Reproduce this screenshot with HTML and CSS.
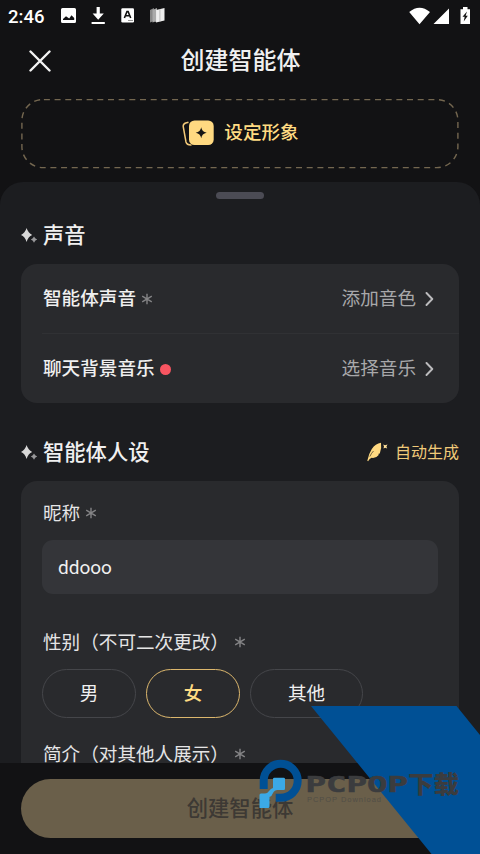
FILE: index.html
```html
<!DOCTYPE html>
<html lang="zh-CN">
<head>
<meta charset="utf-8">
<title>创建智能体</title>
<link rel="stylesheet" href="styles.css">
</head>
<body>
<svg width="0" height="0" class="defs">
  <symbol id="sparkle" viewBox="0 0 17 16"><path d="M5.600 0Q7.200 5.200 11.200 6.900Q7.200 8.600 5.600 13.900Q4 8.600 0 6.900Q4 5.200 5.600 0Z" fill="#d8d8d8"/><path d="M13 8.600Q13.800 10.800 16.200 11.600Q13.800 12.400 13 14.800Q12.200 12.400 9.800 11.600Q12.200 10.800 13 8.600Z" fill="#98989a"/></symbol>
  <symbol id="star" viewBox="0 0 12 12"><path d="M6 .7V11.300M1.200 3.200L10.800 8.800M10.800 3.200L1.200 8.800" stroke="#848486" stroke-width="1.400" fill="none"/></symbol>
  <symbol id="chevron" viewBox="0 0 9 14"><path d="M1.500 1L7.300 7L1.500 13" stroke="#bcbcbe" stroke-width="1.900" fill="none" stroke-linecap="round" stroke-linejoin="round"/></symbol>
</svg>
<div class="screen">
  <div class="status">
    <span class="time">2:46</span>
    <svg class="status-left" width="106" height="18" viewBox="0 0 106 18">
      <path fill="#fff" fill-rule="evenodd" d="M2.500 1H13.500Q15 1 15 2.500V14.500Q15 16 13.500 16H1.500Q0 16 0 14.500V2.500Q0 1 1.500 1ZM2 13H13.200V11L10.500 8.200L8.200 11.400L5 9.300L2 12Z"/>
      <path fill="#fff" d="M35.600 0H38.800V6.500H42.800L37.200 12.700L31.600 6.500H35.600ZM30.600 15H43.800V17H30.600Z"/>
      <rect x="60.300" y="1.200" width="12.700" height="14.300" rx="1.200" fill="#fff"/>
      <path d="M63.400 11L66 4.500H67.100L69.700 11M64.500 8.800H68.600" fill="none" stroke="#111" stroke-width="1.600"/><path d="M67 13.500H72" stroke="#777" stroke-width=".8"/>
      <path fill="#888" d="M89 3L93 1V14L89 15.500Z"/><path fill="#aaa" d="M91.500 3L96 1V14L91.500 15.500Z"/><path fill="#eee" d="M95 3L103.500 1V13.500L95 15.500Z"/><path stroke="#aaa" stroke-width=".7" d="M94.600 2V15M98.900 2V15"/>
    </svg>
    <svg class="status-right" width="62" height="18" viewBox="0 0 62 18">
      <path fill="#fff" d="M.2 5Q10.500-3.600 21 5L10.500 17.200ZM40 1.500V17H24.500ZM51.500 2.200H54V0H58.500V2.200H61V17H51.500Z"/>
      <path fill="#111" d="M58 4.600L53.500 9.700H55.700L54.700 14.400L58.800 8.800H56.600Z"/>
    </svg>
  </div>
  <header class="header">
    <svg class="close" width="22" height="22" viewBox="0 0 22 22"><path d="M1.500 1.500L20.500 20.500M20.500 1.500L1.500 20.500" stroke="#f4f4f4" stroke-width="2.400" stroke-linecap="round"/></svg>
    <h1 class="title">创建智能体</h1>
  </header>
  <div class="avatar">
    <svg class="avatar-frame" width="438" height="70" viewBox="0 0 438 70"><rect x=".9" y=".6" width="436" height="68" rx="21" fill="none" stroke="#746750" stroke-width="1.400" stroke-dasharray="6 4.680" stroke-dashoffset="-1"/></svg>
    <svg width="32" height="28" viewBox="0 0 32 28"><path d="M6.500 3.200L3.700 4Q.7 5 1.300 8L4 23Q4.800 26.200 9.500 26" fill="none" stroke="#f3c978" stroke-width="1.500"/><rect x="7" y="1.500" width="24.700" height="24.500" rx="5.500" fill="#ffd981"/><path d="M19.200 8.300Q19.900 13 24.700 13.800Q19.900 14.600 19.200 19.300Q18.500 14.600 13.700 13.800Q18.500 13 19.200 8.300Z" fill="#151515"/></svg>
    <span>设定形象</span>
  </div>
  <main class="sheet">
    <div class="handle"></div>
    <div class="section first"><svg class="spark"><use href="#sparkle"/></svg><h2>声音</h2></div>
    <div class="card rows">
      <div class="row"><b>智能体声音</b><svg class="req"><use href="#star"/></svg><span class="value">添加音色</span><svg class="chev"><use href="#chevron"/></svg></div>
      <div class="row line"><b>聊天背景音乐</b><i class="dot"></i><span class="value">选择音乐</span><svg class="chev"><use href="#chevron"/></svg></div>
    </div>
    <div class="section second"><svg class="spark"><use href="#sparkle"/></svg><h2>智能体人设</h2>
      <svg class="feather" width="21" height="20" viewBox="0 0 21 20"><path d="M.3 18.800Q1.800 11.500 4.800 7Q8.400 1.800 14 .8Q14.900 6.500 12.800 11.400L11 12L12 12.800Q9.200 16.500 4.600 15.800Q2.500 16.500 1.100 19.200Z" fill="#ffd981"/><path d="M2.800 14.500Q4.500 11 6.500 9" stroke="#3a3022" stroke-width=".7" fill="none"/><path d="M16.200 2.500L18.100 3.200L20.500 2.600L19.400 4.500L20.200 6.500L18.200 5.700L16.500 6.600L17 4.600Z" fill="#ffe19b"/></svg>
      <span class="auto">自动生成</span></div>
    <div class="card form">
      <div class="label">昵称<svg class="req"><use href="#star"/></svg></div>
      <div class="input">ddooo</div>
      <div class="label gender">性别（不可二次更改）<svg class="req"><use href="#star"/></svg></div>
      <div class="pills"><span class="pill">男</span><span class="pill active">女</span><span class="pill wide">其他</span></div>
      <div class="label intro">简介（对其他人展示）<svg class="req"><use href="#star"/></svg></div>
    </div>
  </main>
  <footer class="footer"><div class="create">创建智能体</div></footer>
  <svg class="watermark" width="229" height="148" viewBox="251 706 229 148">
    <path d="M311 706H456.500L480 735V854H431.500Z" fill="#005095"/>
    <path d="M263.700 789V780.800A17 17 0 1 1 280.700 797.800H275.700" fill="none" stroke="#005095" stroke-width="8"/>
    <path d="M273 779Q273 777.700 274.300 777.700H283.700Q285 777.700 285 779V788.700Q285 790 283.700 790H277.500Q274.500 790 273 793Q272 796 269.500 797V806.500Q269.500 808 268 808H259.500V795Q259.500 793.500 261 793.500H265Q268 793 269.500 790.500Q270.500 788.500 273 788Z" fill="#3ba9e6"/>
    <text class="wm-en" x="305.500" y="791.700" textLength="102.500" lengthAdjust="spacingAndGlyphs">PCPOP</text>
    <text class="wm-cn" x="408" y="793" textLength="51" lengthAdjust="spacingAndGlyphs">下载</text>
    <text class="wm-sub" x="307" y="801.500" textLength="74">PCPOP Download</text>
  </svg>
</div>
</body>
</html>
```
FILE: styles.css
```css
* { box-sizing: border-box; }
body { margin: 0; background: #121214; font-family: Roboto, "Noto Sans CJK SC", sans-serif; color: #f0f0f0; }
svg { flex: none; display: block; }
h1, h2 { margin: 0; font-weight: 500; }
.defs { position: absolute; }
.screen { position: relative; width: 480px; height: 854px; overflow: hidden; display: flex; flex-direction: column; }
.status { height: 32px; flex: none; display: flex; padding: 7px 8px 0; }
.time { width: 53px; font-size: 18.500px; line-height: 20px; font-weight: 500; color: #fff; }
.status-right { margin-left: auto; margin-right: 1px; }
.header { height: 67px; flex: none; display: flex; padding: 18px 29px 0; }
.title { flex: 1; margin-right: 21px; text-align: center; font-size: 24px; line-height: 24px; height: 24px; margin-top: -1px; }
.avatar { position: relative; height: 70px; flex: none; margin: 0 21px; display: flex; justify-content: center; align-items: center; gap: 10px; color: #ffdb82; font-size: 18.600px; line-height: 20px; font-weight: 500; padding: 0 0 2px 1px; }
.avatar-frame { position: absolute; inset: 0; }
.sheet { flex: none; height: 582px; margin-top: 13px; border-radius: 23px 23px 0 0; background: #1c1d20; padding: 10px 21px 0; overflow: hidden; }
.handle { width: 48px; height: 7px; border-radius: 3.500px; background: #4b4b54; margin: 0 auto; }
.section { display: flex; height: 30px; align-items: center; }
.section h2 { font-size: 21.300px; line-height: 30px; margin-left: 5px; }
.first { margin-top: 22px; }
.second { margin-top: 35px; }
.spark { width: 17px; height: 16px; }
.card { background: #292a2d; border-radius: 16px; }
.rows { height: 139px; margin-top: 13px; }
.row { height: 70px; display: flex; align-items: center; padding: 0 25px 0 22px; font-size: 18.600px; line-height: 28px; }
.row b { font-weight: 500; }
.line { position: relative; }
.line::before { content: ""; position: absolute; left: 21px; right: 0; top: -1px; height: 1px; background: #303134; }
.req { width: 12px; height: 12px; margin-left: 5px; }
.dot { width: 11px; height: 11px; border-radius: 50%; background: #f85561; margin-left: 5px; }
.value { margin-left: auto; color: #a8a8aa; }
.chev { width: 9px; height: 14px; margin-left: 9px; }
.feather { margin-left: auto; margin-top: -2px; }
.auto { margin: -4px 0 0 7px; font-size: 16px; color: #f0ca79; }
.form { height: 310px; margin-top: 13px; padding: 16px 21px 0; }
.label { height: 28px; display: flex; align-items: center; font-size: 18.600px; color: #e5e5e6; padding-left: 1px; }
.label .req { margin-top: 3px; }
.input { margin-top: 15px; height: 54px; border-radius: 11px; background: #343539; padding: 0 0 0 16px; display: flex; align-items: center; font-size: 19px; color: #f0f0f0; }
.gender { margin-top: 32px; }
.pills { display: flex; gap: 10px; margin-top: 15px; }
.pill { width: 94px; height: 49px; border: 1px solid #45464a; border-radius: 25px; display: flex; align-items: center; justify-content: center; font-size: 18.600px; padding-bottom: 4px; }
.wide { width: 113px; }
.active { border: 1.500px solid #dcb76d; color: #ffdb82; font-weight: 500; }
.intro { margin-top: 20px; }
.footer { position: absolute; left: 0; right: 0; bottom: 0; height: 91px; background: #121214; padding: 16px 21px 0; }
.create { height: 59px; border-radius: 30px; background: #6a5f4a; color: #3d3934; font-size: 21.300px; line-height: 59px; text-align: center; font-weight: 500; }
.watermark { position: absolute; right: 0; bottom: 0; }
.wm-en { font: 700 21.500px "DejaVu Sans Mono", monospace; fill: #3b3c3e; stroke: #3b3c3e; stroke-width: .6px; }
.wm-cn { font: 900 24px "Noto Sans CJK SC", sans-serif; fill: #3b3c3e; }
.wm-sub { font: 7.500px "Liberation Sans", sans-serif; fill: #514e46; }
```
